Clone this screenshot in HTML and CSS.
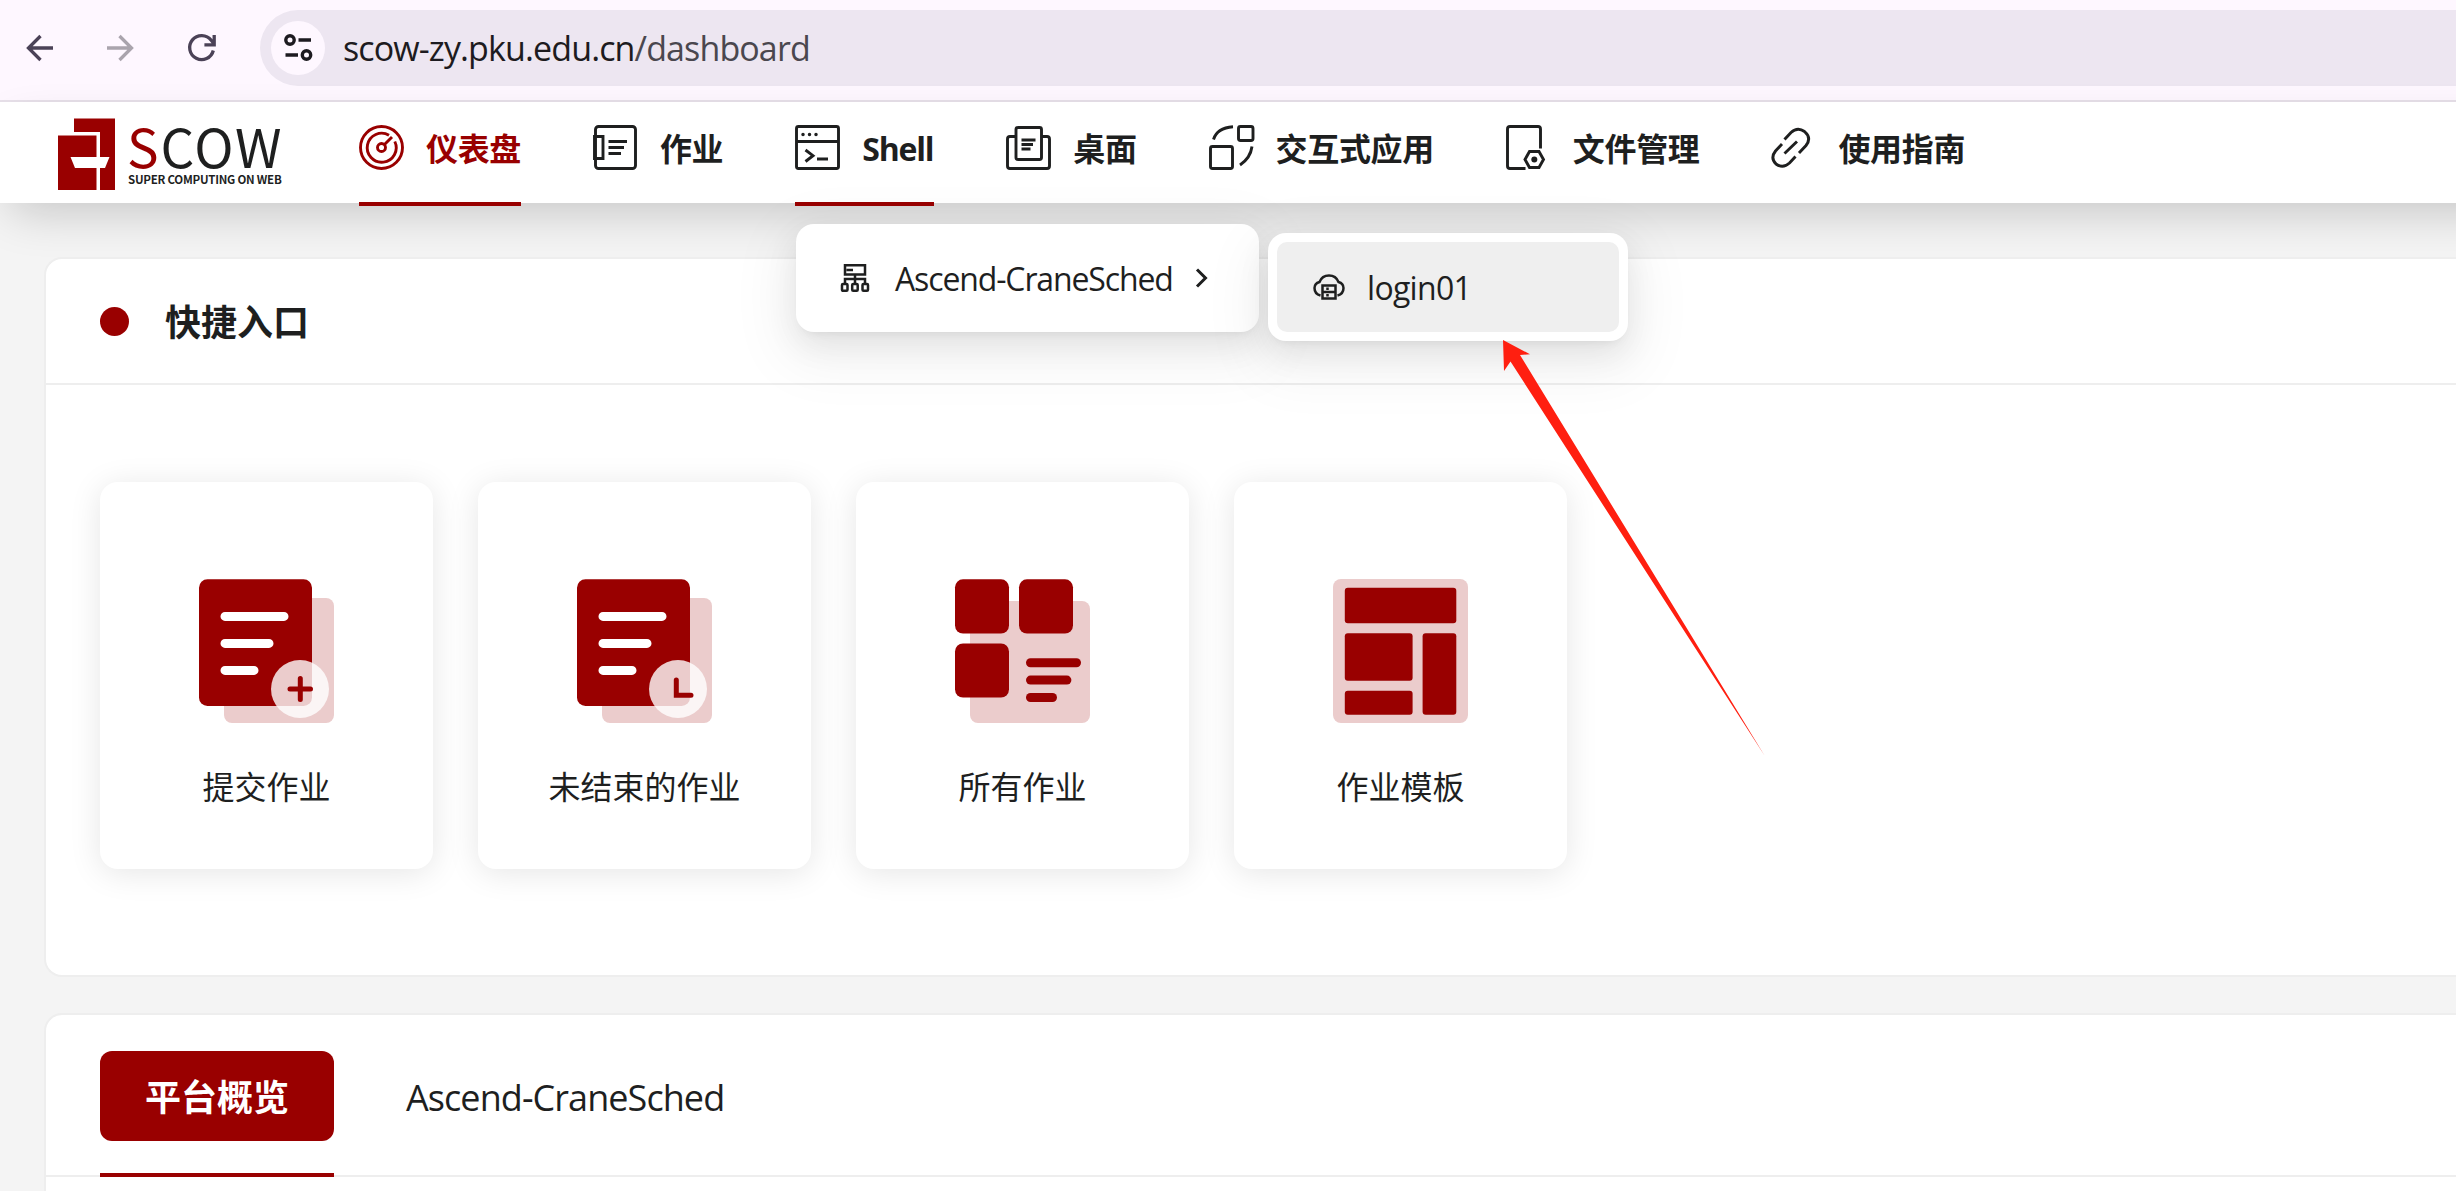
FILE: index.html
```html
<!DOCTYPE html>
<html lang="zh-CN">
<head>
<meta charset="utf-8">
<title>SCOW</title>
<link rel="stylesheet" href="styles.css">
</head>
<body>
<div class="browser-bar">
  <svg class="bb-icon" viewBox="0 0 28 28"><path d="M27 14H3M14.500 2L2.500 14l12 12"/></svg>
  <svg class="bb-icon disabled" viewBox="0 0 28 28"><path d="M0 14h24M12.500 2l12 12-12 12"/></svg>
  <svg class="bb-icon" viewBox="0 0 28 28"><path d="M25.300 16.500A12 12 0 1 1 23.200 6.300L25.800 9.300M26.200 1v9.800h-9.800"/></svg>
  <div class="address">
    <span class="site-info"><svg viewBox="0 0 28 28"><circle cx="6" cy="6" r="4.200"/><path d="M14.500 6H27M1.500 21H14"/><circle cx="22.500" cy="21" r="4.200"/></svg></span>
    <span class="url">scow-zy.pku.edu.cn<span class="path">/dashboard</span></span>
  </div>
</div>

<header class="header">
  <div class="logo">
    <svg class="logo-mark" viewBox="0 0 57 72"><path class="red" d="M16 .5H57V72H42V14H16zM0 17.500H38.500V72H0z"/><path class="white" d="M12.500 39H51.500L47 50H17z"/></svg>
    <div class="logo-text"><span class="logo-name"><b>S</b>COW</span><span class="logo-sub">SUPER COMPUTING ON WEB</span></div>
  </div>
  <nav class="nav">
    <a class="nav-item active">
      <svg viewBox="0 0 46 46"><circle cx="22.500" cy="22.500" r="21"/><path d="M30 10.200A14.500 14.500 0 1 0 35.800 16.500M25.500 19.500L33 12"/><circle cx="22.500" cy="22.500" r="4"/></svg>
      <span>仪表盘</span></a>
    <a class="nav-item">
      <svg viewBox="0 0 46 46"><rect x="2.500" y="1.500" width="40" height="42" rx="3"/><path d="M1.500 11.500H10V33.500H1.500zM15.500 16.500H34M15.500 22.500H31M15.500 28.500H28"/></svg>
      <span>作业</span></a>
    <a class="nav-item selected">
      <svg viewBox="0 0 46 46"><rect x="1.500" y="1.500" width="42" height="42" rx="2"/><path d="M1.500 16.500H43.500M10.500 25L18 30.700L10.500 36.500M22 34H33"/><path class="dots" d="M8 9.500h.01M14.500 9.500h.01M21 9.500h.01"/></svg>
      <span class="latin">Shell</span></a>
    <a class="nav-item">
      <svg viewBox="0 0 46 46"><path d="M9 11.500H4Q1.500 11.500 1.500 14V41Q1.500 43.500 4 43.500H41Q43.500 43.500 43.500 41V14Q43.500 11.500 41 11.500H36"/><rect x="10" y="2.500" width="25.500" height="32" rx="2"/><path d="M15.500 15H29.500M15.500 19.500H27M15.500 24H24.500"/></svg>
      <span>桌面</span></a>
    <a class="nav-item">
      <svg viewBox="0 0 46 46"><rect x="29.500" y="1.500" width="14.500" height="14" rx="2"/><rect x="1.500" y="21.500" width="22" height="22" rx="2"/><path d="M4.500 14.500Q8 3 24 1.800M43 21.500Q41.500 33 31 40"/></svg>
      <span>交互式应用</span></a>
    <a class="nav-item">
      <svg viewBox="0 0 46 46"><path d="M19.500 43.500H4Q1.500 43.500 1.500 41V4Q1.500 1.500 4 1.500H32Q34.500 1.500 34.500 4V23.500M23.500 26.500H33L37.500 34.500L33 42.500H23.500L19 34.500z"/><circle class="dot" cx="28.300" cy="34.500" r="3"/></svg>
      <span>文件管理</span></a>
    <a class="nav-item">
      <svg viewBox="0 0 46 46"><path d="M13.500 14.500L20 7.500Q26.500 1.500 33.500 6.500Q41 13 35 20.500L28 28M11 19L4.500 26Q-1 33 5 39Q12 44 18.500 38L24.500 31.500M13.500 28.500L26 16.500"/></svg>
      <span>使用指南</span></a>
  </nav>

  <div class="popup menu">
    <div class="menu-item">
      <svg class="cluster" viewBox="0 0 28 28"><path d="M4 1.200H24V10.500H4zM5.500 6H12M14 10.500V20M4 20V15H24V20"/><rect x="1" y="20" width="5.500" height="6.800" rx="1"/><rect x="11.200" y="20" width="5.500" height="6.800" rx="1"/><rect x="21.500" y="20" width="5.500" height="6.800" rx="1"/></svg>
      <span class="menu-label">Ascend-CraneSched</span>
      <svg class="chevron" viewBox="0 0 13 20"><path d="M2 1.500L10.500 10L2 18.500"/></svg>
    </div>
  </div>
  <div class="popup submenu">
    <div class="submenu-item">
      <svg class="cloud" viewBox="0 0 32 26"><path d="M7.500 21.500Q1.500 20 1.500 14Q1.500 9.500 6.500 8Q9 1.500 16 1.500Q23 1.500 25.500 8Q30.500 9.500 30.500 14Q30.500 20 24.500 21.500M9.500 11.500H22.500V24.500H9.500zM9.500 18H22.500M14.500 13.500v2.500M14.500 20v2.500"/></svg>
      <span class="login-label">login01</span>
    </div>
  </div>
</header>

<main class="main">
  <section class="card quick">
    <h2 class="card-head"><i class="bullet"></i><span>快捷入口</span></h2>
    <div class="tiles">
      <div class="tile">
        <svg viewBox="0 0 135 144"><rect class="pale" x="25" y="19" width="110" height="125" rx="8"/><rect class="red" y=".3" width="113" height="126.700" rx="8.500"/><path class="lines" d="M26 37.400H85M26 64.400H70M26 91.400H55"/><circle class="badge" cx="101" cy="110" r="29"/><path class="mark" d="M91 110H111.500M101.300 99.500V120.500"/></svg>
        <span>提交作业</span>
      </div>
      <div class="tile">
        <svg viewBox="0 0 135 144"><rect class="pale" x="25" y="19" width="110" height="125" rx="8"/><rect class="red" y=".3" width="113" height="126.700" rx="8.500"/><path class="lines" d="M26 37.400H85M26 64.400H70M26 91.400H55"/><circle class="badge" cx="101" cy="110" r="29"/><path class="mark" d="M99.300 101V116.300H114"/></svg>
        <span>未结束的作业</span>
      </div>
      <div class="tile">
        <svg viewBox="0 0 135 144"><rect class="pale" x="15" y="22" width="120" height="122" rx="8"/><g class="red"><rect y=".3" width="54" height="54.200" rx="8"/><rect x="64" y=".3" width="54" height="54.200" rx="8"/><rect y="64.500" width="54" height="54" rx="8"/><rect x="71" y="79.300" width="55" height="9" rx="4.500"/><rect x="71" y="96.600" width="45.400" height="9" rx="4.500"/><rect x="71" y="114" width="31" height="9" rx="4.500"/></g></svg>
        <span>所有作业</span>
      </div>
      <div class="tile">
        <svg viewBox="0 0 135 144"><rect class="pale" width="135" height="144" rx="8"/><g class="red"><rect x="11.800" y="8.800" width="111.500" height="35.500" rx="3"/><rect x="11.800" y="54.200" width="67.800" height="47.600" rx="3"/><rect x="11.800" y="111.700" width="67.800" height="24" rx="3"/><rect x="89.600" y="54.200" width="33.700" height="81.500" rx="3"/></g></svg>
        <span>作业模板</span>
      </div>
    </div>
  </section>
  <section class="card overview">
    <div class="tabs">
      <div class="tab current"><span>平台概览</span></div>
      <div class="tab"><span class="tab-label">Ascend-CraneSched</span></div>
    </div>
  </section>
</main>
<svg class="pointer" viewBox="0 0 262 414"><path d="M1 0L28 14.300L18 15L262.500 415.500L8.500 21.500L2 31z"/></svg>
</body>
</html>
```

FILE: styles.css
```css
* { box-sizing: border-box; }
html { overflow: hidden; }
body {
  margin: 0;
  width: 2456px;
  height: 1191px;
  overflow: hidden;
  position: relative;
  background: #f4f4f4;
  color: #1e1f1f;
  font-family: "Open Sans", "Noto Sans CJK SC", sans-serif;
}
svg { display: block; flex: none; overflow: visible; }

.browser-bar {
  height: 102px;
  padding: 10px 0 14px 26px;
  border-bottom: 2px solid #e7e0e9;
  background: #fef7ff;
  display: flex;
}
.bb-icon { width: 28px; height: 28px; margin: 24px 53px 0 0; fill: none; stroke: #4b4257; stroke-width: 3.300; }
.bb-icon.disabled { stroke: #aaa4ad; }
.bb-icon:nth-of-type(3) { margin-right: 44px; }
.address { flex: 1; height: 76px; border-radius: 38px 0 0 38px; background: #ede6f1; display: flex; align-items: center; padding-left: 11px; }
.site-info { width: 54px; height: 54px; border-radius: 50%; background: #fef7ff; display: flex; align-items: center; justify-content: center; }
.site-info svg { width: 28px; height: 28px; fill: none; stroke: #1d1b20; stroke-width: 3.400; }
.url { margin-left: 18px; font-size: 34px; line-height: 76px; letter-spacing: -0.880px; color: #1d1b20; white-space: nowrap; }
.path { color: #4a474e; }

.header {
  position: relative;
  z-index: 2;
  height: 101px;
  margin-right: -80px;
  background: #fff;
  box-shadow: 0 18px 48px -10px rgba(0, 0, 0, .2);
  display: flex;
}
.logo { width: 359px; padding: 16px 0 0 58px; display: flex; gap: 12px; }
.logo-mark { width: 57px; height: 72px; }
.red { fill: #900; }
.white { fill: #fff; }
.logo-text { display: flex; flex-direction: column; font-family: "Noto Sans CJK SC", sans-serif; white-space: nowrap; }
.logo-name { font-size: 53px; line-height: 54px; letter-spacing: 1.800px; }
.logo-name b { color: #900; font-weight: 400; }
.logo-sub { margin-left: 1px; font-size: 11.500px; font-weight: 700; line-height: 14px; letter-spacing: -0.250px; }

.nav { display: flex; gap: 72px; }
.nav-item { height: 104px; padding-top: 23px; display: flex; align-items: flex-start; gap: 21px; font-size: 32px; font-weight: 700; line-height: 48px; letter-spacing: -0.350px; white-space: nowrap; }
.nav-item svg { width: 46px; height: 46px; fill: none; stroke: currentColor; stroke-width: 2.900; }
.nav-item .dots { stroke-width: 3.500; stroke-linecap: round; }
.nav-item .dot { fill: currentColor; stroke: none; }
.nav-item.active { color: #900; }
.active, .selected { border-bottom: 4px solid #900; }
.nav-item .latin { letter-spacing: -1.200px; width: 72px; }

.popup { position: absolute; height: 108px; border-radius: 18px; background: #fff; box-shadow: 0 12px 32px rgba(0, 0, 0, .08), 0 6px 12px -8px rgba(0, 0, 0, .12), 0 18px 56px 16px rgba(0, 0, 0, .05); font-size: 32px; white-space: nowrap; }
.menu { left: 796px; top: 122px; width: 463px; }
.submenu { left: 1268px; top: 131px; width: 360px; padding: 9px; }
.menu-item { height: 108px; display: flex; align-items: center; padding-left: 45px; }
.menu-item svg, .submenu-item svg { fill: none; stroke: #1e1f1f; stroke-width: 2.500; }
.cluster { width: 28px; height: 28px; }
.menu-label { width: 300px; margin-left: 26px; padding-top: 1px; letter-spacing: -1.130px; }
.menu-item .chevron { width: 13px; height: 20px; stroke-width: 3; }
.submenu-item { height: 90px; border-radius: 10px; background: #efefef; display: flex; align-items: center; padding-left: 36px; }
.cloud { width: 32px; height: 26px; }
.login-label { margin-left: 22px; padding-top: 1px; letter-spacing: -0.700px; }

.main { padding: 54px 0 0 44px; display: flex; flex-direction: column; gap: 36px; }
.card { background: #fff; border: 2px solid #eee; border-right: 0; border-radius: 18px 0 0 18px; }
.quick { height: 720px; }
.card-head { margin: 0; height: 126px; padding: 1px 0 0 54px; border-bottom: 2px solid #eee; display: flex; align-items: center; gap: 36px; font-size: 36px; line-height: 50px; }
.card-head span { padding-top: 3px; }
.bullet { width: 29px; height: 29px; border-radius: 50%; background: #900; }
.tiles { padding: 97px 0 0 54px; display: flex; gap: 45px; }
.tile { width: 333px; height: 387px; padding-top: 97px; border-radius: 18px; background: #fff; box-shadow: 0 4px 32px rgba(0, 0, 0, .1); display: flex; flex-direction: column; align-items: center; gap: 41px; font-size: 32px; line-height: 46px; }
.tile svg { width: 135px; height: 144px; }
.pale { fill: #ebcccc; }
.lines { fill: none; stroke: #fff; stroke-width: 9; stroke-linecap: round; }
.badge { fill: #fff; fill-opacity: .8; }
.mark { fill: none; stroke: #900; stroke-width: 5; stroke-linecap: round; }
.overview { height: 178px; border-bottom: 0; border-radius: 18px 0 0 0; }
.tabs { height: 162px; padding: 36px 0 0 54px; border-bottom: 2px solid #eee; display: flex; gap: 72px; font-size: 36px; line-height: 94px; }
.tab { height: 126px; white-space: nowrap; }
.tab.current { width: 234px; border-bottom: 4px solid #900; }
.tab.current span { display: block; height: 90px; border-radius: 12px; background: #900; color: #fff; font-weight: 700; text-align: center; }
.tab-label { letter-spacing: -0.930px; }
.pointer { position: absolute; z-index: 3; left: 1502px; top: 340px; width: 262px; height: 414px; fill: #ff1f10; }
```
